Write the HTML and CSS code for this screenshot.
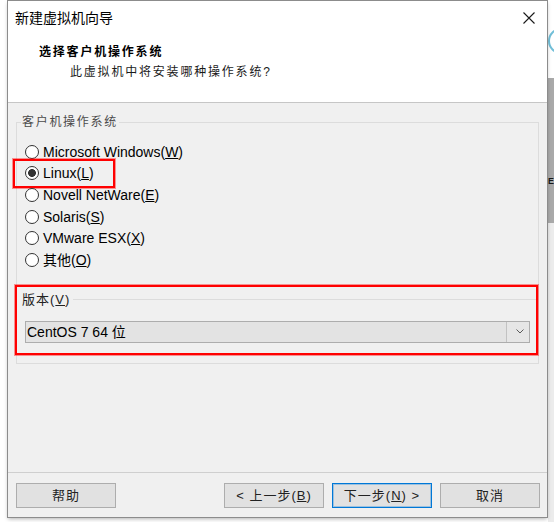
FILE: index.html
```html
<!DOCTYPE html>
<html lang="zh-CN">
<head>
<meta charset="utf-8">
<title>新建虚拟机向导</title>
<link rel="stylesheet" href="styles.css">
</head>
<body>
<div class="screen">
  <div class="gutter"></div>
  <div class="dialog">
    <div class="top">
      <div class="titlebar">
        <span class="title">新建虚拟机向导</span>
        <span class="close"><svg width="12" height="12" viewBox="0 0 12 12"><path d="M0.5 0.5 L11.5 11.5 M11.5 0.5 L0.5 11.5" stroke="#1a1a1a" stroke-width="1.1" fill="none"/></svg></span>
      </div>
      <div class="heading">选择客户机操作系统</div>
      <div class="subheading">此虚拟机中将安装哪种操作系统?</div>
    </div>
    <div class="body">
      <fieldset class="group">
        <legend>客户机操作系统</legend>
        <div class="radio"><span class="circle"></span><span class="lbl">Microsoft Windows(<u>W</u>)</span></div>
        <div class="radio checked"><span class="circle"></span><span class="lbl">Linux(<u>L</u>)</span><span class="mark mark-linux"></span></div>
        <div class="radio"><span class="circle"></span><span class="lbl">Novell NetWare(<u>E</u>)</span></div>
        <div class="radio"><span class="circle"></span><span class="lbl">Solaris(<u>S</u>)</span></div>
        <div class="radio"><span class="circle"></span><span class="lbl">VMware ESX(<u>X</u>)</span></div>
        <div class="radio"><span class="circle"></span><span class="lbl">其他(<u>O</u>)</span></div>
        <div class="version">
          <div class="vhead"><span class="vlabel">版本(<u>V</u>)</span><span class="vline"></span></div>
          <div class="combo">
            <span class="ctext">CentOS 7 64 位</span>
            <span class="carrow"><svg width="8" height="5" viewBox="0 0 8 5"><polyline points="0.5,0.5 4,4 7.5,0.5" fill="none" stroke="#5a5a5a" stroke-width="1"/></svg></span>
          </div>
          <span class="mark mark-version"></span>
        </div>
      </fieldset>
    </div>
    <div class="footer">
      <button class="btn">帮助</button>
      <span class="spacer"></span>
      <button class="btn">&lt; 上一步(<u>B</u>)</button>
      <button class="btn default">下一步(<u>N</u>) &gt;</button>
      <button class="btn">取消</button>
    </div>
  </div>
  <div class="side">
    <div class="side-top"><svg width="6" height="78" viewBox="0 0 6 78"><circle cx="13" cy="41" r="12" fill="none" stroke="#72bfd8" stroke-width="2"/></svg></div>
    <div class="side-band"><span class="side-e">E</span></div>
    <div class="side-rest"></div>
  </div>
</div>
</body>
</html>
```

FILE: styles.css
```css
* { box-sizing: border-box; }
html, body { margin: 0; padding: 0; }
body {
  width: 554px;
  height: 522px;
  overflow: hidden;
  background: #fff;
  font-family: "Liberation Sans", "Noto Sans CJK SC", sans-serif;
  color: #000;
}
.screen { display: flex; align-items: flex-start; height: 522px; }
.gutter { width: 7px; flex: none; }
.dialog {
  width: 541px;
  height: 518px;
  flex: none;
  border: 1px solid #8c8c8c;
  display: flex;
  flex-direction: column;
  background: #f0f0f0;
  box-shadow: 0 2px 4px -1px rgba(0,0,0,.3);
  position: relative;
  z-index: 1;
}
.top {
  flex: none;
  height: 102px;
  background: #fff;
  border-bottom: 1px solid #c6c6c6;
}
.titlebar {
  height: 34px;
  display: flex;
  align-items: center;
  justify-content: space-between;
  padding: 0 12px 0 7px;
}
.title { font-size: 14px; line-height: 16px; }
.close { display: flex; }
.heading {
  margin: 9px 0 0 31px;
  font-weight: bold;
  font-size: 12px;
  letter-spacing: 1.8px;
  line-height: 16px;
}
.subheading {
  margin: 4px 0 0 62px;
  font-size: 12px;
  letter-spacing: 1.8px;
  line-height: 16px;
  color: #1a1a1a;
}
.body { flex: 1; padding: 11px 8px 0 8px; }
.group {
  margin: 0;
  padding: 11px 0 20px 0;
  border: 1px solid #dcdcdc;
  min-width: 0;
}
.group legend {
  margin-left: 4px;
  padding: 0 1px;
  font-size: 12px;
  letter-spacing: 1.7px;
  line-height: 16px;
  color: #4a4a4a;
}
.radio {
  height: 21.6px;
  display: flex;
  align-items: center;
  padding-left: 8px;
  position: relative;
  font-size: 14px;
}
.circle {
  width: 14px;
  height: 14px;
  border: 1px solid #333;
  border-radius: 50%;
  background: #fff;
  flex: none;
}
.checked .circle { background: radial-gradient(circle, #333 0 3.6px, #fff 4.2px); }
.lbl { margin-left: 4px; line-height: 18px; }
.mark {
  position: absolute;
  border: 2px solid #ff0000;
  box-shadow: 0 0 0 1px rgba(255,0,0,.4);
  pointer-events: none;
}
.mark-linux { left: -4px; top: -4px; width: 102px; height: 29px; }
.version { position: relative; margin-top: 21px; }
.vhead { display: flex; align-items: center; height: 16px; padding-left: 5px; }
.vlabel { font-size: 13px; letter-spacing: 1px; line-height: 16px; color: #222; }
.vline { flex: 1; height: 1px; background: #dcdcdc; margin-left: 3px; }
.combo {
  margin: 13px 8px 0;
  height: 22px;
  border: 1px solid #adadad;
  background: #e3e3e3;
  display: flex;
  align-items: center;
}
.ctext { flex: 1; padding-left: 1px; font-size: 14px; line-height: 20px; }
.carrow {
  width: 23px;
  height: 20px;
  border-left: 1px solid #c2c2c2;
  background: #e6e6e6;
  display: flex;
  align-items: center;
  justify-content: center;
  padding-left: 3px;
}
.mark-version { left: -2px; top: -7px; width: 523px; height: 70px; }
.footer {
  flex: none;
  height: 45px;
  border-top: 1px solid #cfcfcf;
  display: flex;
  align-items: flex-start;
  padding: 10px 7px 0 8px;
  gap: 8px;
}
.spacer { flex: 1; }
.btn {
  width: 100px;
  height: 25px;
  flex: none;
  border: 1px solid #adadad;
  background: #e1e1e1;
  font-family: "Liberation Sans", "Noto Sans CJK SC", sans-serif;
  font-size: 13px;
  letter-spacing: 1px;
  color: #222;
  padding: 0;
  line-height: 23px;
}
.btn.default { border-color: #0078d7; box-shadow: inset 0 0 0 1px rgba(0,120,215,.3); }
.side {
  width: 6px;
  flex: none;
  height: 522px;
  display: flex;
  flex-direction: column;
}
.side-top { height: 78px; background: #fff; overflow: hidden; }
.side-top svg { display: block; }
.side-band { height: 145px; background: #a9a9a9; padding-top: 97px; }
.side-e { display: block; font-size: 9px; font-weight: bold; line-height: 12px; color: #1a1a1a; }
.side-rest { flex: 1; background: #ececec; }
```
